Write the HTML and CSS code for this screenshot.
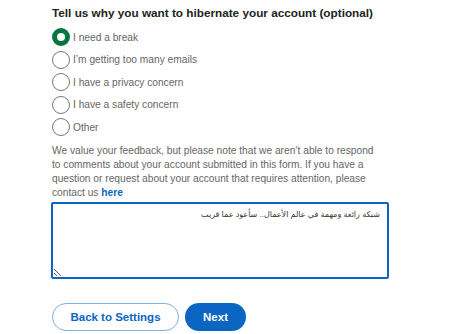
FILE: index.html
```html
<!DOCTYPE html>
<html lang="en">
<head>
    <meta charset="UTF-8">
    <meta name="viewport" content="width=device-width, initial-scale=1.0">
    <title>Hibernate account</title>
    <link rel="stylesheet" href="styles.css">
</head>
<body>
    <div class="page">
        <h2 class="title">Tell us why you want to hibernate your account (optional)</h2>

        <!-- Reasons -->
        <div class="reasons">
            <label class="reason"><input type="radio" name="reason" checked><span>I need a break</span></label>
            <label class="reason"><input type="radio" name="reason"><span>I’m getting too many emails</span></label>
            <label class="reason"><input type="radio" name="reason"><span>I have a privacy concern</span></label>
            <label class="reason"><input type="radio" name="reason"><span>I have a safety concern</span></label>
            <label class="reason"><input type="radio" name="reason"><span>Other</span></label>
        </div>

        <p class="note">We value your feedback, but please note that we aren’t able to respond to comments about your account submitted in this form. If you have a question or request about your account that requires attention, please contact us <a href="#">here</a></p>

        <textarea class="feedback" dir="rtl">شبكة رائعة ومهمة في عالم الأعمال.. سأعود عما قريب</textarea>

        <div class="actions">
            <button class="btn btn-secondary">Back to Settings</button>
            <button class="btn btn-primary">Next</button>
        </div>
    </div>
</body>
</html>
```

FILE: styles.css
```css
body {
    margin: 0;
    font-family: "Liberation Sans", Arial, sans-serif;
    background: #fff;
}
.page {
    padding: 5px 0 0 52px;
    width: 337px;
}
.title {
    margin: 0;
    font-size: 11.75px;
    line-height: 16px;
    font-weight: bold;
    color: #222;
    white-space: nowrap;
}
.reasons {
    display: flex;
    flex-direction: column;
    gap: 4.5px;
    margin-top: 7px;
}
.reason {
    display: flex;
    align-items: center;
    gap: 3px;
    font-size: 10.2px;
    color: #666;
    height: 18px;
}
.reason input {
    appearance: none;
    margin: 0;
    width: 18px;
    height: 18px;
    border: 1.5px solid #777;
    border-radius: 50%;
    box-sizing: border-box;
    background: #fff;
}
.reason input:checked {
    border: 5px solid #057642;
}
.note {
    margin: 8px 0 0;
    width: 330px;
    font-size: 10.2px;
    line-height: 14px;
    color: #666;
}
.note a {
    color: #0a66c2;
    font-weight: bold;
    text-decoration: none;
}
.feedback {
    display: block;
    box-sizing: border-box;
    width: 338px;
    height: 77px;
    margin: 2px 0 0 -1px;
    padding: 6px 7px;
    border: 2px solid #0a66c2;
    border-radius: 2px;
    outline: none;
    font-family: "Liberation Sans", "DejaVu Sans", sans-serif;
    font-size: 8px;
    color: #333;
    resize: both;
}
.actions {
    display: flex;
    gap: 6px;
    margin-top: 24px;
}
.btn {
    height: 28px;
    border-radius: 14px;
    font-family: "Liberation Sans", Arial, sans-serif;
    font-size: 11.5px;
    font-weight: bold;
    cursor: pointer;
    padding: 0;
}
.btn-secondary {
    width: 127px;
    background: #fff;
    color: #0a66c2;
    border: 1px solid #7fb0df;
}
.btn-primary {
    width: 61px;
    background: #0a66c2;
    color: #fff;
    border: none;
}
```
